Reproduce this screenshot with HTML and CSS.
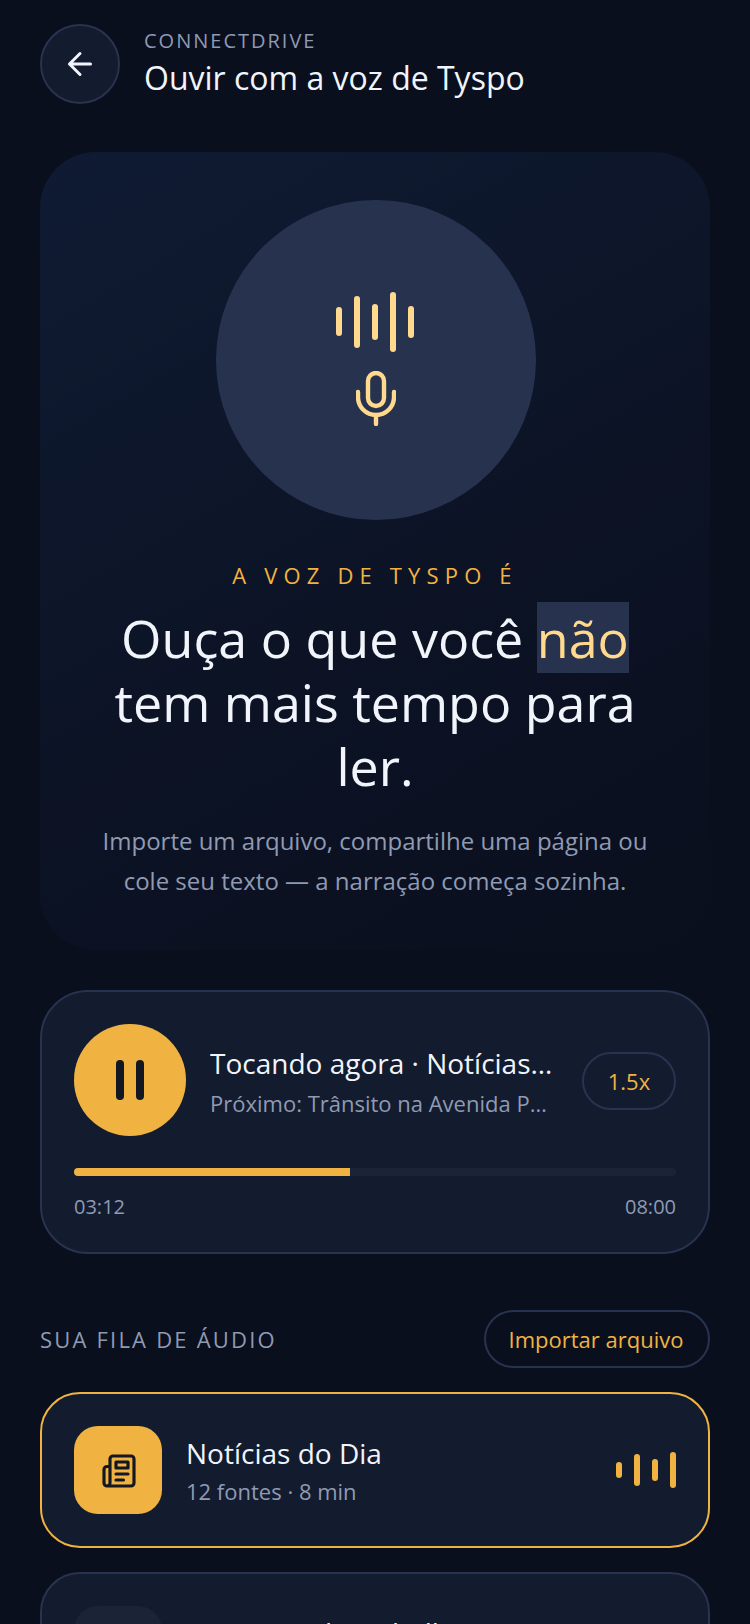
FILE: index.html
```html
<!DOCTYPE html>
<html lang="pt-BR">
<head>
  <meta charset="UTF-8">
  <meta name="viewport" content="width=device-width, initial-scale=1.0">
  <title>Ouvir com a voz de Tyspo</title>
  <link rel="stylesheet" href="styles.css">
</head>
<body>
  <div class="page">
    <header class="top">
      <button class="back" aria-label="Voltar">
        <svg width="36" height="36" viewBox="0 0 24 24" fill="none" stroke="#f1f5fb" stroke-width="2" stroke-linecap="round" stroke-linejoin="round"><path d="M19 12H5M12 19l-7-7 7-7"/></svg>
      </button>
      <div class="top-text">
        <div class="brand">CONNECTDRIVE</div>
        <div class="top-title">Ouvir com a voz de Tyspo</div>
      </div>
    </header>

    <section class="hero">
      <div class="orb">
        <svg class="wave" width="78" height="60" viewBox="0 0 78 60" fill="#ffd98e">
          <rect x="0" y="15" width="6" height="29" rx="3"/>
          <rect x="18" y="4" width="6" height="52" rx="3"/>
          <rect x="36" y="12" width="6" height="36" rx="3"/>
          <rect x="54" y="0" width="6" height="60" rx="3"/>
          <rect x="72" y="14" width="6" height="32" rx="3"/>
        </svg>
        <svg width="40" height="55" viewBox="0 0 40 55" fill="none" stroke="#ffd98e" stroke-width="4.400" stroke-linecap="round"><rect x="12" y="2" width="16" height="33" rx="8"/><path d="M2 21v5a18 18 0 0 0 36 0v-5M20 45v8"/></svg>
      </div>
      <div class="eyebrow">A VOZ DE TYSPO É</div>
      <h1 class="headline">Ouça o que você <span class="mark">não</span> tem mais tempo para ler.</h1>
      <p class="lead">Importe um arquivo, compartilhe uma página ou cole seu texto — a narração começa sozinha.</p>
    </section>

    <section class="player">
      <div class="player-row">
        <button class="pause" aria-label="Pausar"><span></span><span></span></button>
        <div class="player-text">
          <div class="player-title">Tocando agora · Notícias do Dia</div>
          <div class="player-next">Próximo: Trânsito na Avenida Paulista</div>
        </div>
        <div class="speed">1.5x</div>
      </div>
      <div class="track"><div class="fill" style="width: 45.8%"></div></div>
      <div class="times"><span>03:12</span><span>08:00</span></div>
    </section>

    <div class="queue-head">
      <div class="queue-label">SUA FILA DE ÁUDIO</div>
      <button class="import">Importar arquivo</button>
    </div>

    <div class="item active">
      <div class="thumb">
        <svg width="36" height="36" viewBox="0 0 24 24" fill="none" stroke="#121722" stroke-width="2.100" stroke-linecap="round" stroke-linejoin="round"><path d="M4 22h16a2 2 0 0 0 2-2V4a2 2 0 0 0-2-2H8a2 2 0 0 0-2 2v16a2 2 0 0 1-2 2Zm0 0a2 2 0 0 1-2-2v-9c0-1.100.900-2 2-2h2"/><path d="M18 14h-8M15 18h-5M10 6h8v4h-8V6Z"/></svg>
      </div>
      <div class="item-text">
        <div class="item-title">Notícias do Dia</div>
        <div class="item-sub">12 fontes · 8 min</div>
      </div>
      <div class="bars"><i class="b1"></i><i class="b2"></i><i class="b3"></i><i class="b4"></i></div>
    </div>

    <div class="item">
      <div class="thumb muted"></div>
      <div class="item-text">
        <div class="item-title">Conversa de trabalho</div>
        <div class="item-sub">6 fontes · 5 min</div>
      </div>
    </div>
  </div>
</body>
</html>
```

FILE: styles.css
```css
html, body {
  margin: 0;
  height: 100%;
  overflow: hidden;
  background: #0a0f1d;
  font-family: "Open Sans", sans-serif;
  color: #f1f5fb;
}
button {
  font-family: inherit;
  padding: 0;
  cursor: pointer;
}
.page {
  padding: 24px 40px 0;
}

/* cabecera */
.top {
  display: flex;
  align-items: center;
  gap: 24px;
}
.back {
  width: 80px;
  height: 80px;
  flex: none;
  display: flex;
  align-items: center;
  justify-content: center;
  background: #131b2e;
  border: 2px solid #283350;
  border-radius: 50%;
}
.brand {
  font-size: 20px;
  line-height: 26px;
  letter-spacing: 2px;
  color: #8f9ab3;
}
.top-title {
  font-size: 32px;
  line-height: 44px;
  margin-top: 2px;
}

/* hero */
.hero {
  margin-top: 48px;
  height: 798px;
  box-sizing: border-box;
  padding: 48px 48px 0;
  border-radius: 56px;
  background: linear-gradient(150deg, #0f1b33 0%, #0c1325 55%, #0a0f1d 100%);
  text-align: center;
}
.orb {
  width: 320px;
  height: 320px;
  box-sizing: border-box;
  margin-left: 128px;
  padding-bottom: 2px;
  display: flex;
  flex-direction: column;
  align-items: center;
  justify-content: center;
  gap: 19px;
  border-radius: 50%;
  background: #27324f;
}
.wave {
  margin-right: 2px;
}
.eyebrow {
  margin-top: 41px;
  font-size: 22px;
  line-height: 28px;
  letter-spacing: 6.16px;
  color: #f0b342;
}
.headline {
  margin: 17px 0 0;
  font-size: 52px;
  line-height: 64px;
  font-weight: 400;
}
.mark {
  color: #ffd98e;
  background: #27324f;
}
.lead {
  margin: 23px -10px 0;
  font-size: 24px;
  line-height: 40px;
  color: #8f9ab3;
}

/* reproductor */
.player {
  margin-top: 40px;
  height: 264px;
  box-sizing: border-box;
  padding: 32px;
  background: #131b2e;
  border: 2px solid #283350;
  border-radius: 48px;
}
.player-row {
  display: flex;
  align-items: center;
}
.pause {
  width: 112px;
  height: 112px;
  flex: none;
  display: flex;
  align-items: center;
  justify-content: center;
  gap: 12px;
  background: #f0b342;
  border: 0;
  border-radius: 50%;
}
.pause span {
  width: 8px;
  height: 40px;
  border-radius: 4px;
  background: #121722;
}
.player-text {
  flex: 1;
  min-width: 0;
  margin: 0 24px;
  padding-top: 2px;
}
.player-title {
  font-size: 28px;
  line-height: 40px;
  white-space: nowrap;
  overflow: hidden;
  text-overflow: ellipsis;
}
.player-next {
  margin-top: 4px;
  font-size: 22px;
  line-height: 32px;
  color: #8f9ab3;
  white-space: nowrap;
  overflow: hidden;
  text-overflow: ellipsis;
}
.speed {
  width: 94px;
  height: 58px;
  flex: none;
  display: flex;
  align-items: center;
  justify-content: center;
  box-sizing: border-box;
  margin-top: 2px;
  font-size: 22px;
  color: #f0b342;
  border: 2px solid #283350;
  border-radius: 29px;
}
.track {
  margin-top: 32px;
  height: 8px;
  border-radius: 4px;
  background: #1b2436;
}
.fill {
  height: 100%;
  border-radius: 4px 0 0 4px;
  background: #f0b342;
}
.times {
  display: flex;
  justify-content: space-between;
  margin-top: 15px;
  font-size: 20px;
  line-height: 32px;
  color: #8f9ab3;
}

/* fila */
.queue-head {
  display: flex;
  align-items: center;
  justify-content: space-between;
  margin-top: 56px;
}
.queue-label {
  font-size: 22px;
  letter-spacing: 2.2px;
  color: #8f9ab3;
}
.import {
  height: 58px;
  width: 226px;
  padding-right: 2px;
  font-size: 22px;
  color: #f0b342;
  background: transparent;
  border: 2px solid #283350;
  border-radius: 29px;
}
.item {
  display: flex;
  align-items: center;
  gap: 24px;
  margin-top: 24px;
  height: 156px;
  box-sizing: border-box;
  padding: 0 32px;
  background: #131b2e;
  border: 2px solid #283350;
  border-radius: 40px;
}
.item.active {
  border-color: #f0b342;
}
.thumb {
  width: 88px;
  height: 88px;
  flex: none;
  display: flex;
  align-items: center;
  justify-content: center;
  border-radius: 24px;
  background: #f0b342;
}
.thumb svg {
  margin: 2px 0 0 2px;
}
.thumb.muted {
  background: #1b2436;
}
.item-text {
  flex: 1;
  min-width: 0;
}
.item-title {
  font-size: 28px;
  line-height: 40px;
}
.item-sub {
  margin-top: 2px;
  font-size: 22px;
  line-height: 32px;
  color: #8f9ab3;
}
.bars {
  display: flex;
  align-items: center;
  gap: 12px;
}
.bars i {
  width: 6px;
  border-radius: 3px;
  background: #f0b342;
}
.b1 { height: 16px; }
.b2 { height: 32px; }
.b3 { height: 22px; }
.b4 { height: 36px; }
```
